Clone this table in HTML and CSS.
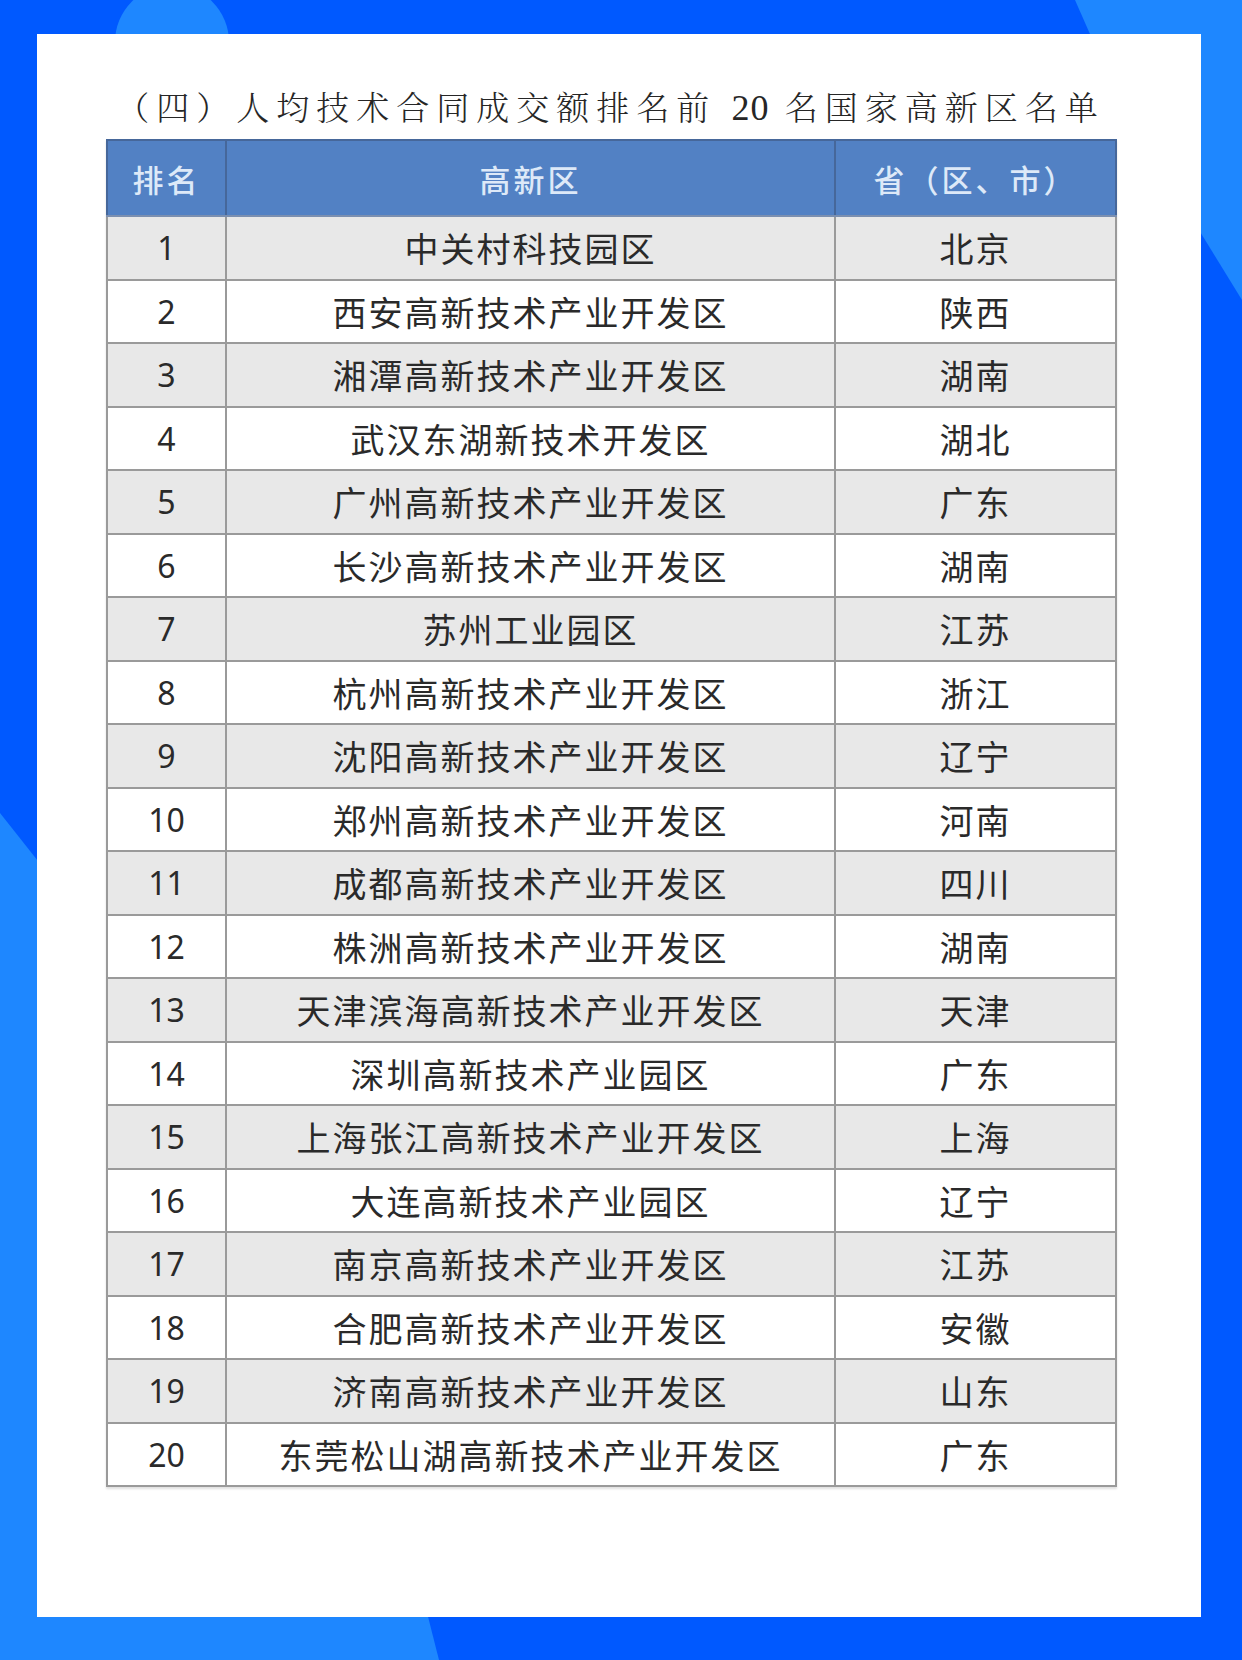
FILE: index.html
```html
<!DOCTYPE html>
<html lang="zh-CN">
<head>
<meta charset="utf-8">
<title>人均技术合同成交额排名前20名国家高新区名单</title>
<link rel="stylesheet" href="styles.css">
</head>
<body>
<div class="page">
  <svg class="backdrop" viewBox="0 0 1242 1660" width="1242" height="1660" aria-hidden="true">
    <rect x="0" y="0" width="1242" height="1660" fill="#0059ff"/>
    <circle cx="172" cy="42" r="57" fill="#1e87ff"/>
    <polygon points="1075,0 1242,0 1242,300 1119,100" fill="#1e87ff"/>
    <polygon points="0,813 330,1230 439,1660 0,1660" fill="#1e87ff"/>
  </svg>
  <main class="card">
    <h1 class="title">（四）人均技术合同成交额排名前 <span class="digits">20</span> 名国家高新区名单</h1>
    <table class="rank">
      <colgroup>
        <col class="c-rank">
        <col class="c-zone">
        <col class="c-prov">
      </colgroup>
      <thead>
        <tr><th>排名</th><th>高新区</th><th>省（区、市）</th></tr>
      </thead>
      <tbody>
        <tr><td class="num">1</td><td>中关村科技园区</td><td>北京</td></tr>
        <tr><td class="num">2</td><td>西安高新技术产业开发区</td><td>陕西</td></tr>
        <tr><td class="num">3</td><td>湘潭高新技术产业开发区</td><td>湖南</td></tr>
        <tr><td class="num">4</td><td>武汉东湖新技术开发区</td><td>湖北</td></tr>
        <tr><td class="num">5</td><td>广州高新技术产业开发区</td><td>广东</td></tr>
        <tr><td class="num">6</td><td>长沙高新技术产业开发区</td><td>湖南</td></tr>
        <tr><td class="num">7</td><td>苏州工业园区</td><td>江苏</td></tr>
        <tr><td class="num">8</td><td>杭州高新技术产业开发区</td><td>浙江</td></tr>
        <tr><td class="num">9</td><td>沈阳高新技术产业开发区</td><td>辽宁</td></tr>
        <tr><td class="num">10</td><td>郑州高新技术产业开发区</td><td>河南</td></tr>
        <tr><td class="num">11</td><td>成都高新技术产业开发区</td><td>四川</td></tr>
        <tr><td class="num">12</td><td>株洲高新技术产业开发区</td><td>湖南</td></tr>
        <tr><td class="num">13</td><td>天津滨海高新技术产业开发区</td><td>天津</td></tr>
        <tr><td class="num">14</td><td>深圳高新技术产业园区</td><td>广东</td></tr>
        <tr><td class="num">15</td><td>上海张江高新技术产业开发区</td><td>上海</td></tr>
        <tr><td class="num">16</td><td>大连高新技术产业园区</td><td>辽宁</td></tr>
        <tr><td class="num">17</td><td>南京高新技术产业开发区</td><td>江苏</td></tr>
        <tr><td class="num">18</td><td>合肥高新技术产业开发区</td><td>安徽</td></tr>
        <tr><td class="num">19</td><td>济南高新技术产业开发区</td><td>山东</td></tr>
        <tr><td class="num">20</td><td>东莞松山湖高新技术产业开发区</td><td>广东</td></tr>
      </tbody>
    </table>
  </main>
</div>
</body>
</html>
```

FILE: styles.css
```css
html, body {
  margin: 0;
  padding: 0;
  background: #0059ff;
}

.page {
  width: 1242px;
  height: 1660px;
  overflow: hidden;
  display: grid;
  grid-template-columns: 1242px;
  grid-template-rows: 1660px;
}

.backdrop {
  grid-area: 1 / 1;
  display: block;
}

.card {
  grid-area: 1 / 1;
  margin: 34px 41px 43px 37px;
  background: #ffffff;
  padding: 54px 86px 0 69px;
  box-sizing: border-box;
}

.title {
  width: 1009px;
  margin: 0 0 11px 0;
  height: 40px;
  line-height: 40px;
  text-align: center;
  font-family: "Liberation Serif", "Noto Serif CJK SC", "Noto Sans CJK SC", serif;
  font-size: 33px;
  font-weight: 300;
  letter-spacing: 7px;
  color: #262626;
  white-space: nowrap;
}

.title .digits {
  font-size: 36px;
  letter-spacing: 1px;
}

.rank {
  width: 1009px;
  border-collapse: collapse;
  table-layout: fixed;
  font-family: "Noto Sans", "Noto Sans CJK SC", sans-serif;
  color: #2a2a2a;
  box-shadow: 0 2px 2px rgba(0, 0, 0, 0.12);
}

.c-rank { width: 119px; }
.c-zone { width: 609px; }
.c-prov { width: 281px; }

.rank th {
  height: 74px;
  padding: 0;
  background: #5281c4;
  color: #dde9f8;
  font-size: 31px;
  font-weight: 500;
  letter-spacing: 3px;
  text-align: center;
  border: 2px solid #46679a;
  border-bottom: 2px solid #7b8fb0;
}

.rank td {
  height: 61.5px;
  padding: 0;
  text-align: center;
  font-size: 34px;
  font-weight: 400;
  letter-spacing: 2px;
  border: 2px solid #9a9a9a;
}

.rank td.num {
  font-size: 32px;
  letter-spacing: 0;
}

.rank tbody tr:nth-child(odd) td {
  background: #e8e8e8;
}

.rank tbody tr:nth-child(even) td {
  background: #ffffff;
}
```
